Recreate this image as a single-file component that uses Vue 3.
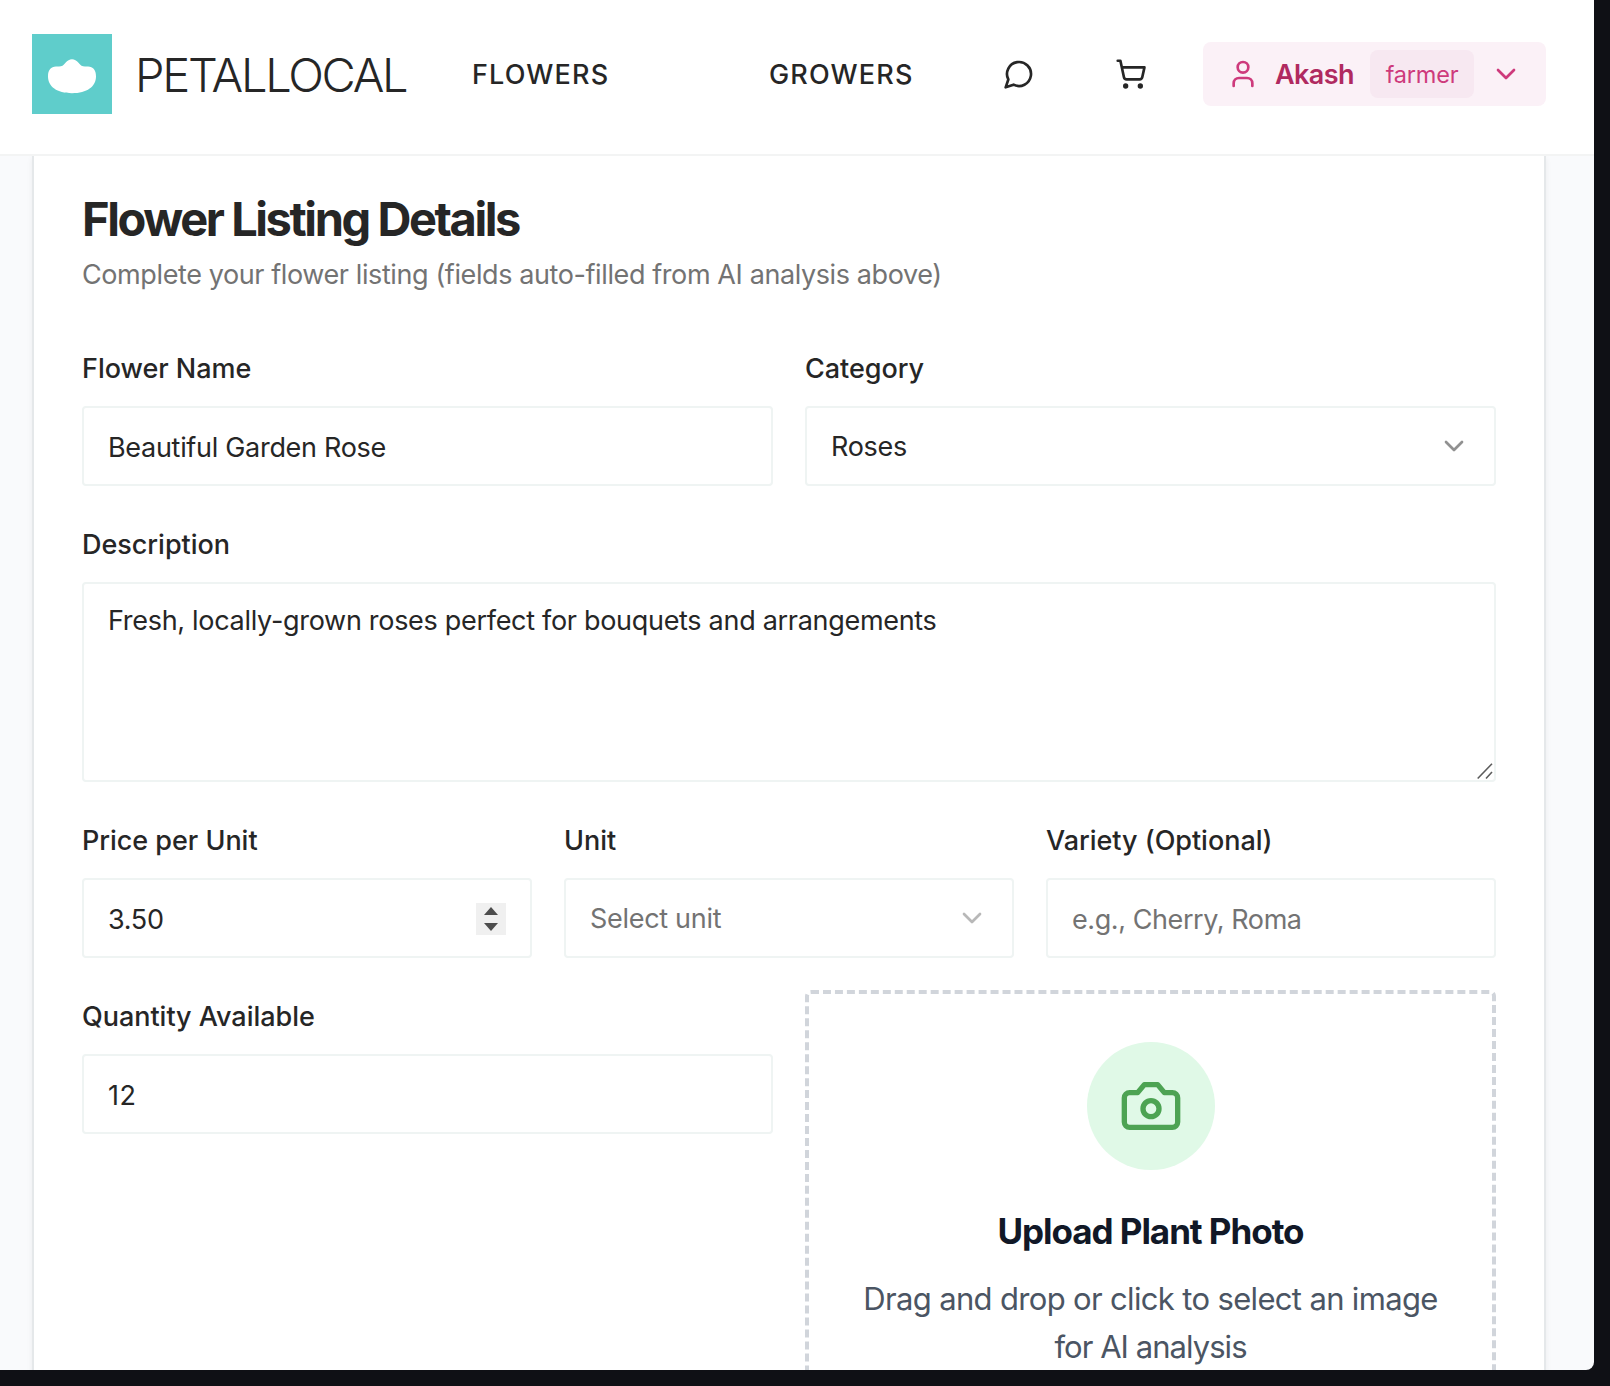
<script setup>
import { ref } from 'vue'

const name = ref('Beautiful Garden Rose')
const description = ref('Fresh, locally-grown roses perfect for bouquets and arrangements')
const price = ref('3.50')
const quantity = ref('12')
</script>

<template>
  <div class="backdrop">
    <div class="window">
      <header class="topbar">
        <div class="logo">
          <svg viewBox="0 0 80 80" width="80" height="80">
            <path fill="#fff" d="M40 25.200C42.500 25.200 44.500 26.500 46.500 28.800C48.800 31.500 50 32.600 53 32.600H56C61 32.600 64 36 64 42.500C64 52.500 55 59.200 40 59.200C25 59.200 16 52.500 16 42.500C16 36 19 32.600 24 32.600H27C30 32.600 31.200 31.500 33.500 28.800C35.500 26.500 37.500 25.200 40 25.200Z" />
          </svg>
        </div>
        <span class="brand">PETALLOCAL</span>
        <nav class="nav">
          <a class="nav-flowers">FLOWERS</a>
          <a class="nav-growers">GROWERS</a>
        </nav>
        <svg class="icon chat" viewBox="0 0 24 24"><path d="M7.9 20A9 9 0 1 0 4 16.1L2 22Z" /></svg>
        <svg class="icon cart" viewBox="0 0 24 24">
          <circle cx="8" cy="21" r="1" /><circle cx="19" cy="21" r="1" />
          <path d="M2.05 2.05h2l2.66 12.42a2 2 0 0 0 2 1.58h9.78a2 2 0 0 0 1.95-1.57l1.65-7.43H5.12" />
        </svg>
        <div class="user">
          <svg class="icon" viewBox="0 0 24 24"><path d="M19 21v-2a4 4 0 0 0-4-4H9a4 4 0 0 0-4 4v2" /><circle cx="12" cy="7" r="4" /></svg>
          <span class="user-name">Akash</span>
          <span class="role">farmer</span>
          <svg class="icon" viewBox="0 0 24 24"><path d="m6 9 6 6 6-6" /></svg>
        </div>
      </header>

      <main class="page">
        <section class="card">
          <h1>Flower Listing Details</h1>
          <p class="sub">Complete your flower listing (fields auto-filled from AI analysis above)</p>

          <div class="row">
            <div class="field">
              <label>Flower Name</label>
              <div class="control">{{ name }}</div>
            </div>
            <div class="field">
              <label>Category</label>
              <div class="control select">
                <span>Roses</span>
                <svg class="icon half" viewBox="0 0 24 24"><path d="m6 9 6 6 6-6" /></svg>
              </div>
            </div>
          </div>

          <div class="row">
            <div class="field">
              <label>Description</label>
              <div class="control area">
                <span>{{ description }}</span>
                <svg class="grip" width="18" height="18" viewBox="0 0 18 18"><path d="M1.700 16.500 16 1.800M10 16.500 16 10" /></svg>
              </div>
            </div>
          </div>

          <div class="row">
            <div class="field">
              <label>Price per Unit</label>
              <div class="control">
                <span>{{ price }}</span>
                <svg class="spin" width="30" height="32" viewBox="0 0 30 32">
                  <rect width="30" height="32" fill="#f0f0f0" />
                  <path fill="#4d4d4d" d="M15 4 22 12H8ZM15 28 22 20H8Z" />
                </svg>
              </div>
            </div>
            <div class="field">
              <label>Unit</label>
              <div class="control select placeholder">
                <span>Select unit</span>
                <svg class="icon half" viewBox="0 0 24 24"><path d="m6 9 6 6 6-6" /></svg>
              </div>
            </div>
            <div class="field">
              <label>Variety (Optional)</label>
              <div class="control placeholder hint">e.g., Cherry, Roma</div>
            </div>
          </div>

          <div class="row halves">
            <div class="field">
              <label>Quantity Available</label>
              <div class="control count">{{ quantity }}</div>
            </div>
            <div class="upload">
              <div class="circle">
                <svg viewBox="0 0 24 24" width="64" height="64"><path d="M14.5 4h-5L7 7H4a2 2 0 0 0-2 2v9a2 2 0 0 0 2 2h16a2 2 0 0 0 2-2V9a2 2 0 0 0-2-2h-3l-2.500-3z" /><circle cx="12" cy="13" r="3" /></svg>
              </div>
              <h2>Upload Plant Photo</h2>
              <p>Drag and drop or click to select an image <span class="tail">for AI analysis</span></p>
            </div>
          </div>
        </section>
      </main>
    </div>
  </div>
</template>

<style>
body { margin: 0; background: #0f1015; }
</style>

<style scoped>
* { box-sizing: border-box; }
.backdrop {
  width: 1610px;
  height: 1386px;
  padding: 0 16px 16px 0;
  overflow: hidden;
  background: #0f1015;
  color: #262626;
  font-family: Inter, "Liberation Sans", sans-serif;
  font-size: 27px;
}
.window {
  display: flex;
  flex-direction: column;
  height: 1370px;
  overflow: hidden;
  background: #f9fafc;
  border-bottom-right-radius: 8px;
}
.topbar {
  display: flex;
  align-items: center;
  flex: none;
  height: 156px;
  padding: 0 48px 6px 32px;
  border-bottom: 2px solid #f3f4f4;
  background: #fff;
  white-space: nowrap;
}
.logo { width: 80px; height: 80px; background: #5fcdcb; }
.logo svg { display: block; }
.brand {
  width: 337px;
  margin-left: 23px;
  padding-top: 2px;
  font-size: 47px;
  font-weight: 300;
  line-height: 64px;
  letter-spacing: -2.27px;
}
.nav { display: flex; width: 531px; padding-top: 2px; font-weight: 500; letter-spacing: 1.15px; line-height: 40px; }
.nav-flowers { width: 297px; }
.icon {
  flex: none;
  width: 32px;
  height: 32px;
  fill: none;
  stroke: currentColor;
  stroke-width: 2;
  stroke-linecap: round;
  stroke-linejoin: round;
}
.cart { margin-left: 80px; }
.user {
  display: flex;
  align-items: center;
  gap: 16px;
  width: 343px;
  height: 64px;
  margin-left: auto;
  padding: 0 24px;
  border-radius: 8px;
  background: #fbf1f7;
  color: #ce3a7c;
}
.user-name { width: 79px; font-weight: 600; letter-spacing: -0.6px; color: #b02a60; }
.role {
  width: 104px;
  height: 48px;
  border-radius: 8px;
  background: #f7e8f1;
  font-size: 23.5px;
  line-height: 50px;
  letter-spacing: -0.2px;
  text-align: center;
}
.page { flex: 1; padding: 0 48px 0 32px; overflow: hidden; }
.card {
  height: 1300px;
  padding: 31px 48px 0;
  border: solid #e5e8ea;
  border-width: 0 2px;
  background: #fff;
  box-shadow: 0 2px 6px rgba(0, 0, 0, 0.06);
}
h1, h2, p { margin: 0; }
h1 { font-size: 47px; font-weight: 700; line-height: 64px; letter-spacing: -2.42px; white-space: nowrap; }
.sub { height: 91px; padding-top: 4px; line-height: 40px; letter-spacing: -0.4px; color: #737373; white-space: nowrap; }
.row { display: flex; gap: 32px; margin-bottom: 32px; }
.halves { display: grid; grid-template-columns: 1fr 1fr; }
.field { display: flex; flex: 1 1 0; flex-direction: column; min-width: 0; }
label { height: 64px; padding-top: 7px; font-weight: 500; line-height: 40px; letter-spacing: -0.03px; white-space: nowrap; }
.control {
  display: flex;
  align-items: center;
  justify-content: space-between;
  height: 80px;
  padding: 2px 24px 0;
  border: 2px solid #eff4f3;
  border-radius: 4px;
  background: #fff;
  letter-spacing: -0.3px;
  white-space: nowrap;
}
.select { padding-top: 0; }
.area { position: relative; align-items: flex-start; height: 200px; padding-top: 17px; line-height: 40px; }
.grip { position: absolute; right: 0; bottom: 0; fill: none; stroke: #5c5c5c; stroke-width: 1.6; }
.placeholder { color: #737373; }
.hint { letter-spacing: -0.42px; }
.count { letter-spacing: 0.5px; }
.half { opacity: 0.5; }
.upload {
  min-width: 0;
  height: 500px;
  padding: 48px 44px;
  border: 4px dashed #d1d5db;
  border-radius: 6px;
  text-align: center;
}
.circle {
  display: flex;
  align-items: center;
  justify-content: center;
  width: 128px;
  height: 128px;
  margin: 0 auto 33px;
  border-radius: 50%;
  background: #e0f9e7;
}
.circle svg { fill: none; stroke: #4da353; stroke-width: 2; stroke-linecap: round; stroke-linejoin: round; }
h2 { font-size: 35px; font-weight: 700; line-height: 56px; letter-spacing: -1.05px; color: #111827; }
.upload p { margin-top: 16px; font-size: 31px; line-height: 48px; letter-spacing: -0.66px; color: #4b5563; }
.tail { letter-spacing: -0.95px; }
</style>
